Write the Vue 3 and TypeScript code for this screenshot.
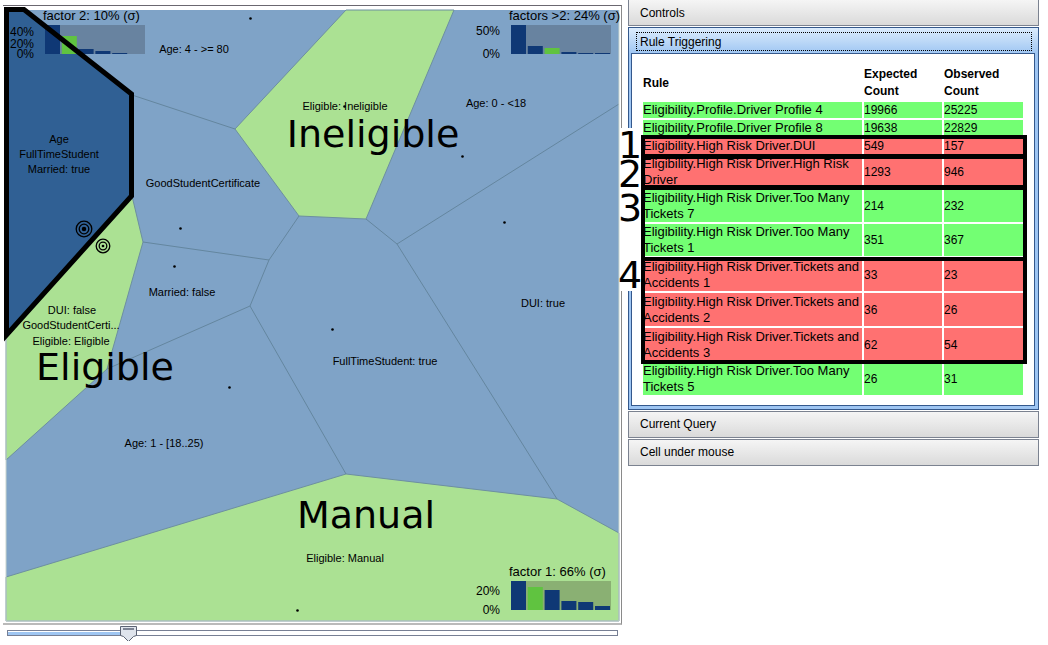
<script setup lang="ts">
import { computed, ref } from 'vue'

interface CellLabel { x: number; y: number; text: string }
interface Chart {
  title: string
  y: number
  x: number
  fill: string
  bars: { h: number; active?: boolean }[]
  ticks: { y: number; text: string }[]
}
interface Rule { name: string; expected: number; observed: number; over: boolean }

const level = ref(19)
const sliderStyle = computed(() => ({ '--fill': `${level.value}%` }))
const openSection = ref('rules')

const labels: CellLabel[] = [
  { x: 59, y: 143, text: 'Age' },
  { x: 59, y: 158, text: 'FullTimeStudent' },
  { x: 59, y: 173, text: 'Married: true' },
  { x: 194, y: 53, text: 'Age: 4 - >= 80' },
  { x: 345, y: 110, text: 'Eligible: Ineligible' },
  { x: 496, y: 107, text: 'Age: 0 - <18' },
  { x: 203, y: 187, text: 'GoodStudentCertificate' },
  { x: 182, y: 296, text: 'Married: false' },
  { x: 72, y: 314, text: 'DUI: false' },
  { x: 71, y: 329, text: 'GoodStudentCerti...' },
  { x: 71, y: 345, text: 'Eligible: Eligible' },
  { x: 543, y: 307, text: 'DUI: true' },
  { x: 385, y: 365, text: 'FullTimeStudent: true' },
  { x: 164, y: 447, text: 'Age: 1 - [18..25)' },
  { x: 345, y: 562, text: 'Eligible: Manual' },
]

const dots = [
  [250, 18], [344, 106], [462, 156], [504, 222], [180, 228],
  [174, 266], [332, 329], [229, 387], [297, 610],
]

const charts: Chart[] = [
  {
    title: 'factor 2: 10% (σ)', x: 45, y: 25, fill: '#6883a0',
    bars: [{ h: 29 }, { h: 18, active: true }, { h: 5 }, { h: 3 }, { h: 1 }],
    ticks: [{ y: 36, text: '40%' }, { y: 48, text: '20%' }, { y: 58, text: '0%' }],
  },
  {
    title: 'factors >2: 24% (σ)', x: 511, y: 25, fill: '#6883a0',
    bars: [{ h: 29 }, { h: 8 }, { h: 6, active: true }, { h: 2 }, { h: 1 }, { h: 1 }],
    ticks: [{ y: 35, text: '50%' }, { y: 58, text: '0%' }],
  },
  {
    title: 'factor 1: 66% (σ)', x: 511, y: 581, fill: '#8ab073',
    bars: [{ h: 29 }, { h: 23, active: true }, { h: 20 }, { h: 9 }, { h: 8 }, { h: 4 }],
    ticks: [{ y: 595, text: '20%' }, { y: 614, text: '0%' }],
  },
]

const hr = 'Eligibility.High Risk Driver.'
const groups: { id: string; rules: Rule[] }[] = [
  {
    id: 'profile',
    rules: [
      { name: 'Eligibility.Profile.Driver Profile 4', expected: 19966, observed: 25225, over: true },
      { name: 'Eligibility.Profile.Driver Profile 8', expected: 19638, observed: 22829, over: true },
    ],
  },
  {
    id: 'risk',
    rules: [
      { name: hr + 'DUI', expected: 549, observed: 157, over: false },
      { name: hr + 'High Risk Driver', expected: 1293, observed: 946, over: false },
      { name: hr + 'Too Many Tickets 7', expected: 214, observed: 232, over: true },
      { name: hr + 'Too Many Tickets 1', expected: 351, observed: 367, over: true },
    ],
  },
  {
    id: 'accidents',
    rules: [
      { name: hr + 'Tickets and Accidents 1', expected: 33, observed: 23, over: false },
      { name: hr + 'Tickets and Accidents 2', expected: 36, observed: 26, over: false },
      { name: hr + 'Tickets and Accidents 3', expected: 62, observed: 54, over: false },
    ],
  },
  {
    id: 'tickets',
    rules: [{ name: hr + 'Too Many Tickets 5', expected: 26, observed: 31, over: true }],
  },
]

const marks = [
  { n: 1, top: 71, height: 24, label: 67 },
  { n: 2, top: 90, height: 36, label: 96 },
  { n: 3, top: 121, height: 76, label: 130 },
  { n: 4, top: 193, height: 107, label: 197 },
]
</script>

<template>
  <main class="page">
    <section class="explorer">
      <div class="frame">
        <svg class="map" viewBox="6 10 613 611" role="img" aria-label="Cell map of eligibility factors">
          <rect x="6" y="10" width="613" height="611" fill="#7fa3c7" />
          <g fill="#abe193" stroke="#6d8fa0" stroke-width="1">
            <polygon points="346,10 454,10 366,219 299,216 235,129" />
            <polygon points="132,196 143,242 107,369 6,460 6,336" />
            <polygon points="6,577 346,474 557,499 619,533 619,621 6,621" />
          </g>
          <path
            d="M132 95L235 129M299 216L269 260L143 242M269 260L250 306L107 369M250 306L346 474M366 219L397 244L619 104M397 244L557 499"
            fill="none" stroke="#64869f" stroke-width="1"
          />
          <path d="M6 10V621H619V10" fill="none" stroke="#c9d5cf" stroke-width="1" />
          <polygon points="7,10 24,10 132,94 132,196 7,335" fill="#306094" />

          <g v-for="c in charts" :key="c.title">
            <rect :x="c.x" :y="c.y" width="100" height="29" :fill="c.fill" />
            <rect
              v-for="(b, i) in c.bars" :key="i"
              :x="c.x + i * 16.8" :y="c.y + 29 - b.h" width="15" :height="b.h"
              :fill="b.active ? '#60c340' : '#0f3875'"
            />
            <text class="title" :x="c.x - 2" :y="c.y - 5">{{ c.title }}</text>
            <text
              v-for="t in c.ticks" :key="t.text"
              class="tick" :x="c.x - 11" :y="t.y"
            >{{ t.text }}</text>
          </g>

          <polygon
            points="6.5,9.5 24,9.5 131.5,94 131.5,196 6.5,335"
            fill="none" stroke="#000" stroke-width="5"
          />

          <text v-for="l in labels" :key="l.text" class="label" :x="l.x" :y="l.y">{{ l.text }}</text>
          <circle v-for="(d, i) in dots" :key="i" :cx="d[0] + 0.5" :cy="d[1] + 0.5" r="1.3" />

          <g fill="none" stroke="#000" stroke-width="1.3">
            <circle cx="84" cy="229" r="7.8" />
            <circle cx="84" cy="229" r="4.8" />
            <circle cx="84" cy="229" r="1.6" fill="#000" />
            <circle cx="103" cy="246" r="6.8" />
            <circle cx="103" cy="246" r="3.8" />
            <circle cx="103" cy="246" r="0.7" fill="#000" />
          </g>

          <text class="outcome" x="373" y="147">Ineligible</text>
          <text class="outcome" x="105" y="380">Eligible</text>
          <text class="outcome" x="366" y="528">Manual</text>
        </svg>
      </div>
      <input
        v-model.number="level" class="slider" type="range" min="0" max="100"
        aria-label="Detail level" :style="sliderStyle"
      >
    </section>

    <aside class="accordion">
      <button class="bar first" type="button" @click="openSection = 'controls'">Controls</button>
      <section class="open">
        <button class="bar active" type="button" aria-expanded="true" @click="openSection = 'rules'">
          Rule Triggering
        </button>
        <div class="body">
          <div class="sheet">
            <div class="strip"></div>
            <table>
              <colgroup>
                <col>
                <col class="expected">
                <col class="observed">
              </colgroup>
              <thead>
                <tr>
                  <th scope="col">Rule</th>
                  <th scope="col">Expected Count</th>
                  <th scope="col">Observed Count</th>
                </tr>
              </thead>
              <tbody v-for="g in groups" :key="g.id" :class="g.id">
                <tr v-for="r in g.rules" :key="r.name" :class="r.over ? 'over' : 'under'">
                  <td class="name">{{ r.name }}</td>
                  <td>{{ r.expected }}</td>
                  <td>{{ r.observed }}</td>
                </tr>
              </tbody>
            </table>
            <template v-for="m in marks" :key="m.n">
              <div class="mark" :style="{ top: m.top + 'px', height: m.height + 'px' }"></div>
              <span class="number" :style="{ top: m.label + 'px' }">{{ m.n }}</span>
            </template>
          </div>
        </div>
      </section>
      <button class="bar" type="button" @click="openSection = 'query'">Current Query</button>
      <button class="bar" type="button" @click="openSection = 'cell'">Cell under mouse</button>
    </aside>
  </main>
</template>

<style>
body {
  background: #fff;
}
</style>

<style scoped>
.page {
  display: grid;
  grid-template-columns: minmax(0, 619fr) minmax(0, 411fr);
  gap: 6px;
  align-items: start;
  padding: 0 9px 0 3px;
  font-family: "Liberation Sans", Arial, Helvetica, sans-serif;
  font-size: 12px;
  color: #000;
}
.explorer {
  padding-top: 5px;
}
.frame {
  padding: 4px 2px 2px 3px;
  border-top: 1px solid #6b6770;
  border-right: 1px solid #8a8a8a;
  border-bottom: 2px solid #bababa;
}
.map {
  display: block;
  width: 100%;
  height: auto;
  overflow: visible;
}
.label {
  font-size: 11px;
  text-anchor: middle;
}
.title {
  font-size: 13px;
}
.tick {
  font-size: 12px;
  text-anchor: end;
}
.outcome {
  font-family: "DejaVu Sans", sans-serif;
  font-size: 38px;
  text-anchor: middle;
}
.slider {
  display: block;
  appearance: none;
  width: calc(100% - 8px);
  height: 16px;
  margin: 0 4px;
  background: none;
}
.slider::-webkit-slider-runnable-track {
  box-sizing: border-box;
  height: 6px;
  border: 1px solid #777f94;
  background:
    linear-gradient(#fff 0 1px, #9fc6f2 1px) 0 0 / var(--fill) 100% no-repeat,
    #fff;
}
.slider::-webkit-slider-thumb {
  appearance: none;
  width: 17px;
  height: 16px;
  margin-top: -5px;
  background: url("data:image/svg+xml,%3Csvg xmlns='http://www.w3.org/2000/svg' width='17' height='16'%3E%3Cpath d='M.5.5h16v9l-3 1-5 5-5-5-3-1z' fill='%23dfe4ec' stroke='%235c6373'/%3E%3Cpath d='M3 3h11' stroke='%237d8494' stroke-width='2'/%3E%3C/svg%3E") no-repeat;
}
.accordion {
  display: flex;
  flex-direction: column;
  gap: 1px;
}
.bar {
  box-sizing: border-box;
  display: block;
  width: 100%;
  height: 27px;
  padding: 0 11px;
  border: 1px solid #7b8290;
  background: linear-gradient(#f5f5f5, #dadada);
  font: inherit;
  line-height: 25px;
  text-align: left;
  color: #000;
}
.first {
  height: 26px;
  padding-top: 1px;
  border-top: 0;
}
.open {
  border: 1px solid #34588c;
  background: linear-gradient(#dcecfd, #9ec5f2 26px);
  padding: 4px 3px 3px 2px;
}
.active {
  width: auto;
  min-width: calc(100% - 8px);
  height: 19px;
  margin: 0 3px 2px 5px;
  padding: 0 3px;
  border: 1px dotted #000;
  background: none;
  line-height: 18px;
}
.body {
  border: 1px solid #34588c;
  background: #fff;
  padding: 10px 9px 8px;
}
.sheet {
  position: relative;
}
table {
  width: 100%;
  table-layout: fixed;
  border-collapse: separate;
  border-spacing: 2px;
}
.expected {
  width: 78px;
}
.observed {
  width: 79px;
}
th {
  padding: 0;
  line-height: 17px;
  text-align: left;
  vertical-align: middle;
}
td {
  padding: 0;
  line-height: 16px;
  vertical-align: middle;
}
.name {
  font-size: 13px;
}
.accidents td {
  height: 33px;
}
.over td {
  background: #73ff73;
}
.under td {
  background: #ff7171;
}
.mark {
  position: absolute;
  left: 0;
  right: -2px;
  box-sizing: border-box;
  border: 4px solid #000;
}
.strip {
  position: absolute;
  left: -21px;
  top: 64px;
  width: 21px;
  height: 163px;
  background: #fff;
}
.number {
  position: absolute;
  left: -23px;
  font-family: "DejaVu Sans", sans-serif;
  font-size: 38px;
  line-height: 28px;
}
</style>
